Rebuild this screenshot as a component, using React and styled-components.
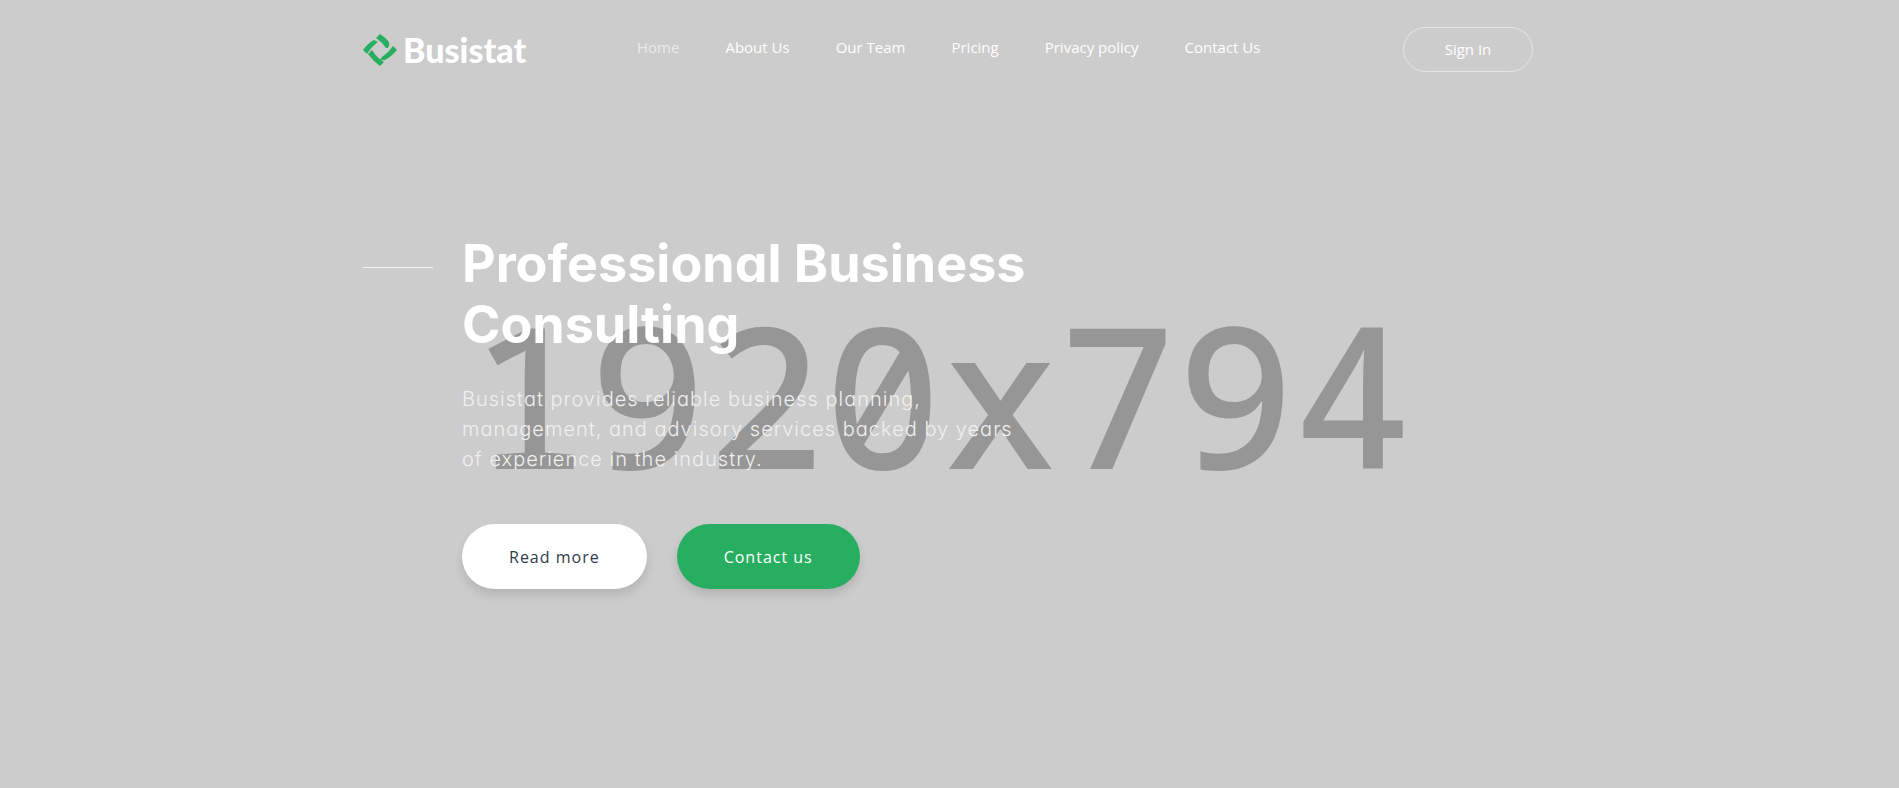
import React from "react";
import styled, { createGlobalStyle } from "styled-components";

const GlobalStyle = createGlobalStyle`
  *, *::before, *::after { box-sizing: border-box; }
  body {
    margin: 0;
    background: #ccc;
    color: #fff;
    font-family: "Open Sans", sans-serif;
  }
`;

const Page = styled.div`
  position: relative;
  min-height: 100vh;
  padding-right: 3px;
  overflow: hidden;
`;

const Backdrop = styled.div`
  position: absolute;
  inset: 0;
  display: flex;
  align-items: center;
  justify-content: center;
  padding: 0 16px 4px 0;
  color: #969696;
  font: 500 196px "Noto Sans Mono", "DejaVu Sans Mono", monospace;
  pointer-events: none;
`;

const Container = styled.div`
  position: relative;
  width: 100%;
  max-width: 1200px;
  margin: 0 auto;
  padding: 0 15px;
`;

const Header = styled.header`
  display: grid;
  grid-template-columns: 274px 1fr 130px;
  align-items: start;
  padding-top: 27px;
`;

const Logo = styled.a`
  display: flex;
  align-items: center;
  gap: 6px;
  color: #fff;
  font: 900 34px/45px Lato, sans-serif;
  text-decoration: none;
`;

const LogoMark = styled.svg`
  width: 34px;
  height: 32px;
`;

const Menu = styled.ul`
  display: flex;
  gap: 46px;
  margin: 0;
  padding: 0;
  list-style: none;
`;

const MenuLink = styled.a`
  color: #fff;
  font-size: 15px;
  font-weight: 500;
  line-height: 40px;
  white-space: nowrap;
  text-decoration: none;
  opacity: ${({ $active }) => ($active ? 0.6 : 1)};
`;

const SignIn = styled.button`
  height: 45px;
  padding: 0 0 2px;
  border: 1px solid #e6e6e6;
  border-radius: 23px;
  background: transparent;
  color: #fff;
  font: 500 15px "Open Sans", sans-serif;
  cursor: pointer;
`;

const Hero = styled.section`
  display: flex;
  align-items: flex-start;
  gap: 29px;
  padding: 161px 0 60px;
`;

const Rule = styled.hr`
  flex: 0 0 70px;
  height: 1px;
  margin: 34px 0 0;
  border: 0;
  background: #f5f5f5;
`;

const Copy = styled.div`
  flex: 0 1 570px;
  font-family: Inter, sans-serif;
  font-feature-settings: "cv11";
`;

const Title = styled.h1`
  margin: 0 0 29px;
  font-size: 52px;
  font-weight: 700;
  line-height: 61px;
`;

const Lead = styled.p`
  margin: 0 0 50px;
  color: #f0f0f0;
  font-size: 20px;
  font-weight: 300;
  line-height: 30px;
  letter-spacing: 1px;
`;

const Actions = styled.div`
  display: flex;
  gap: 30px;
`;

const Action = styled.button`
  height: 65px;
  padding: 0 47px;
  border: 0;
  border-radius: 33px;
  background: ${({ $primary }) => ($primary ? "#28ae61" : "#fff")};
  color: ${({ $primary }) => ($primary ? "#fff" : "#2f3b4c")};
  box-shadow: 0 6px 10px rgba(0, 20, 10, 0.12);
  font: 400 16px "Open Sans", sans-serif;
  letter-spacing: 1px;
  white-space: nowrap;
  cursor: pointer;
`;

const links = ["Home", "About Us", "Our Team", "Pricing", "Privacy policy", "Contact Us"];

export default function App() {
  return (
    <Page>
      <GlobalStyle />
      <Backdrop aria-hidden="true">1920x794</Backdrop>
      <Container>
        <Header>
          <Logo href="#">
            <LogoMark viewBox="0 0 34 32" fill="#28ae61" aria-hidden="true">
              <path d="M13 4 17 0Q23 4 26 8 27 11 25 14L23 14Q19 8 13 4Z" />
              <path d="M30 12 34 16Q28 23 22 26L17 26 19 23Q26 18 30 12Z" />
              <path d="M9 16Q13 23 21 28L17 32Q10 27 5 20Z" />
              <path d="M11 6 15 8Q9 12 4 20L0 16Q5 9 11 6Z" />
            </LogoMark>
            Busistat
          </Logo>
          <nav>
            <Menu>
              {links.map((label) => (
                <li key={label}>
                  <MenuLink href="#" $active={label === "Home"}>{label}</MenuLink>
                </li>
              ))}
            </Menu>
          </nav>
          <SignIn type="button">Sign In</SignIn>
        </Header>
        <Hero>
          <Rule />
          <Copy>
            <Title>Professional Business Consulting</Title>
            <Lead>
              Busistat provides reliable business planning, management, and
              advisory services backed by years of experience in the industry.
            </Lead>
            <Actions>
              <Action type="button">Read more</Action>
              <Action type="button" $primary>Contact us</Action>
            </Actions>
          </Copy>
        </Hero>
      </Container>
    </Page>
  );
}
